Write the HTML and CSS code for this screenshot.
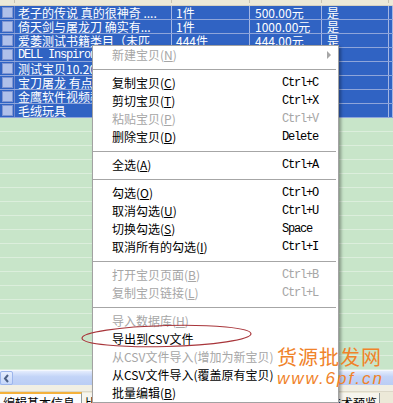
FILE: index.html
```html
<!DOCTYPE html>
<html lang="zh-CN">
<head>
<meta charset="utf-8">
<title>宝贝列表</title>
<link rel="stylesheet" href="styles.css">
</head>
<body>
<div class="screen">
  <div class="grid">
    <div class="head">
      <div class="head-in">
        <div class="hc c0"></div>
        <div class="hc c1">标题</div>
        <div class="hc c2">数量</div>
        <div class="hc c3">价格</div>
        <div class="hc c4">自动上架</div>
        <div class="hc cf"></div>
      </div>
    </div>
    <div class="row"><div class="cell c0"><span class="box"></span></div><div class="cell c1">老子的传说 真的很神奇 ....</div><div class="cell c2">1件</div><div class="cell c3">500.00元</div><div class="cell c4">是</div><div class="cell cf"></div></div>
    <div class="row"><div class="cell c0"><span class="box"></span></div><div class="cell c1">倚天剑与屠龙刀 确实有...</div><div class="cell c2">1件</div><div class="cell c3">1000.00元</div><div class="cell c4">是</div><div class="cell cf"></div></div>
    <div class="row"><div class="cell c0"><span class="box"></span></div><div class="cell c1">爱萎测试书籍类目（未匹</div><div class="cell c2">444件</div><div class="cell c3">444.00元</div><div class="cell c4">是</div><div class="cell cf"></div></div>
    <div class="row"><div class="cell c0"><span class="box"></span></div><div class="cell c1 mono">DELL Inspiron 1420</div><div class="cell c2">1件</div><div class="cell c3">6000.00元</div><div class="cell c4">是</div><div class="cell cf"></div></div>
    <div class="row"><div class="cell c0"><span class="box"></span></div><div class="cell c1">测试宝贝10.20...</div><div class="cell c2">1件</div><div class="cell c3">10.00元</div><div class="cell c4">是</div><div class="cell cf"></div></div>
    <div class="row"><div class="cell c0"><span class="box"></span></div><div class="cell c1">宝刀屠龙 有点...</div><div class="cell c2">1件</div><div class="cell c3">100.00元</div><div class="cell c4">是</div><div class="cell cf"></div></div>
    <div class="row"><div class="cell c0"><span class="box"></span></div><div class="cell c1">金鹰软件视频教程...</div><div class="cell c2">1件</div><div class="cell c3">20.00元</div><div class="cell c4">是</div><div class="cell cf"></div></div>
    <div class="row"><div class="cell c0"><span class="box"></span></div><div class="cell c1">毛绒玩具</div><div class="cell c2">1件</div><div class="cell c3">30.00元</div><div class="cell c4">是</div><div class="cell cf"></div></div>
    <div class="empty"></div>
    <div class="hscroll">
      <div class="sbtn"><svg width="7" height="9" viewBox="0 0 7 9"><path d="M5 1 L2 4.5 L5 8" fill="none" stroke="#4D6185" stroke-width="2"/></svg></div>
      <div class="strack"></div>
    </div>
  </div>
  <div class="gap"></div>
  <div class="tabs">
    <div class="tab on">编辑基本信息</div>
    <div class="tab t2">比较价格信息</div>
    <div class="tab t3">宝贝描述技术预览</div>
  </div>

  <div class="menu">
    <div class="mi dis"><span class="lb">新建宝贝(<u>N</u>)</span><span class="sc"></span><span class="arr"></span></div>
    <div class="sep"></div>
    <div class="mi"><span class="lb">复制宝贝(<u>C</u>)</span><span class="sc">Ctrl+C</span></div>
    <div class="mi"><span class="lb">剪切宝贝(<u>T</u>)</span><span class="sc">Ctrl+X</span></div>
    <div class="mi dis"><span class="lb">粘贴宝贝(<u>P</u>)</span><span class="sc">Ctrl+V</span></div>
    <div class="mi"><span class="lb">删除宝贝(<u>D</u>)</span><span class="sc">Delete</span></div>
    <div class="sep"></div>
    <div class="mi"><span class="lb">全选(<u>A</u>)</span><span class="sc">Ctrl+A</span></div>
    <div class="sep"></div>
    <div class="mi"><span class="lb">勾选(<u>O</u>)</span><span class="sc">Ctrl+O</span></div>
    <div class="mi"><span class="lb">取消勾选(<u>U</u>)</span><span class="sc">Ctrl+U</span></div>
    <div class="mi"><span class="lb">切换勾选(<u>S</u>)</span><span class="sc">Space</span></div>
    <div class="mi"><span class="lb">取消所有的勾选(<u>I</u>)</span><span class="sc">Ctrl+I</span></div>
    <div class="sep"></div>
    <div class="mi dis"><span class="lb">打开宝贝页面(<u>B</u>)</span><span class="sc">Ctrl+B</span></div>
    <div class="mi dis"><span class="lb">复制宝贝链接(<u>L</u>)</span><span class="sc">Ctrl+L</span></div>
    <div class="sep"></div>
    <div class="mi dis"><span class="lb">导入数据库(<u>H</u>)</span><span class="sc"></span></div>
    <div class="mi"><span class="lb">导出到CSV文件</span><span class="sc"></span></div>
    <div class="mi dis"><span class="lb">从CSV文件导入(增加为新宝贝)</span><span class="sc"></span></div>
    <div class="mi"><span class="lb">从CSV文件导入(覆盖原有宝贝)</span><span class="sc"></span></div>
    <div class="mi"><span class="lb">批量编辑(<u>B</u>)</span><span class="sc"></span></div>
  </div>

  <svg class="ring" width="393" height="403" viewBox="0 0 393 403">
    <ellipse cx="166.5" cy="336" rx="84.5" ry="10.5" transform="rotate(-1.5 166.5 336)" fill="none" stroke="#A8353A" stroke-width="1.2"/>
  </svg>

  <div class="mark">
    <div class="mark-cn">货源批发网</div>
    <div class="mark-en">www.6pf.cn</div>
  </div>
</div>
</body>
</html>
```

FILE: styles.css
```css
* {
  box-sizing: border-box;
  margin: 0;
  padding: 0;
}

html, body {
  width: 393px;
  height: 403px;
  overflow: hidden;
}

body {
  font-family: "Noto Sans CJK SC", "Noto Sans", sans-serif;
  font-size: 12px;
  background: #ECE9D8;
  color: #000;
}

.screen {
  position: relative;
  width: 393px;
  height: 403px;
  display: flex;
  flex-direction: column;
  overflow: hidden;
}

/* ---------- grid ---------- */
.grid {
  display: flex;
  flex-direction: column;
  height: 385px;
  flex: none;
}

.head {
  height: 6px;
  overflow: hidden;
  background: #ECE9D8;
  border-bottom: 1px solid #D6D2C2;
  flex: none;
}

.head-in {
  display: flex;
  height: 19px;
  margin-top: -16px;
  line-height: 19px;
}

.hc {
  border-right: 1px solid #C7C3B3;
  white-space: nowrap;
  overflow: hidden;
}

.c0 { width: 15px; flex: none; }
.c1 { width: 157px; flex: none; padding-left: 3px; }
.c2 { width: 78px; flex: none; padding-left: 4px; }
.c3 { width: 72px; flex: none; padding-left: 5px; }
.c4 { width: 67px; flex: none; padding-left: 5px; }
.cf { flex: 1; border-right: none; }

.head .c1 { padding-left: 4px; }
.head .c2 { padding-left: 10px; }
.head .c3 { padding-left: 16px; }
.head .c4 { padding-left: 11px; }

.row {
  display: flex;
  height: 14px;
  flex: none;
  background: #3063C3;
  color: #fff;
  border-bottom: 1px solid #8EA5DA;
  line-height: 14px;
}

.cell {
  border-right: 1px solid #A3B6E4;
  white-space: nowrap;
  overflow: hidden;
}

.row .c0 {
  padding: 1px 0 0 2px;
  border-right: 1px solid #6F87CC;
}

.box {
  display: block;
  width: 11px;
  height: 11px;
  background: #AFC0EA;
  border: 1px solid #7F95D2;
}

.mono {
  font-family: "Liberation Mono", monospace;
  letter-spacing: -1.2px;
}

.empty {
  flex: 1;
  background: repeating-linear-gradient(to bottom, #C8E5C9 0 13px, #DCEEDC 13px 14px);
}

.hscroll {
  height: 15px;
  flex: none;
  display: flex;
  background: linear-gradient(#E4ECFD, #C3D4F7 40%, #BACDF5);
  border-top: 1px solid #F4F7FE;
}

.sbtn {
  width: 13px;
  height: 14px;
  display: flex;
  align-items: center;
  justify-content: center;
  background: linear-gradient(#E6EEFE, #C5D6FA);
  border: 1px solid #9CB5EC;
  border-radius: 2px;
}

.strack {
  flex: 1;
}

.gap {
  height: 6px;
  flex: none;
  background: #F1EFE4;
}

/* ---------- tabs ---------- */
.tabs {
  display: flex;
  height: 12px;
  flex: none;
  background: #ECE9D8;
  border-top: 1px solid #DCD8C8;
}

.tab {
  flex: none;
  white-space: nowrap;
  overflow: hidden;
  line-height: 16px;
  padding-top: 2px;
  border-right: 1px solid #919B9C;
  background: #F6F5EE;
}

.tab.on {
  width: 82px;
  padding-left: 3px;
  background: #FCFCFE;
  border-top: 2px solid #F4B13C;
  padding-top: 1px;
}

.tab.t2 {
  width: 150px;
  padding-left: 3px;
  margin-top: 1px;
}

.tab.t3 {
  width: 148px;
  text-align: right;
  padding-right: 2px;
  margin-top: 1px;
}

/* ---------- context menu ---------- */
.menu {
  position: absolute;
  left: 92px;
  top: 45px;
  width: 247px;
  background: #FFFFFF;
  border: 1px solid #A2A2A2;
  box-shadow: 2px 2px 3px rgba(0, 0, 0, 0.35);
  color: #000;
}

.mi {
  display: flex;
  align-items: center;
  height: 18px;
  line-height: 18px;
  padding-left: 19px;
  white-space: nowrap;
}

.mi.dis {
  color: #A6A6A6;
}

.lb {
  width: 170px;
  flex: none;
}

.sc {
  font-family: "Liberation Mono", monospace;
  font-size: 12px;
  letter-spacing: -1.2px;
}

.arr {
  margin-left: auto;
  margin-right: 7px;
  width: 0;
  height: 0;
  border-left: 4px solid #A6A6A6;
  border-top: 4px solid transparent;
  border-bottom: 4px solid transparent;
}

.sep {
  height: 10px;
  display: flex;
  align-items: center;
  padding-right: 2px;
}

.sep::after {
  content: "";
  flex: 1;
  height: 1px;
  background: #A6A6A6;
}

/* ---------- overlays ---------- */
.ring {
  position: absolute;
  left: 0;
  top: 0;
  pointer-events: none;
}

.mark {
  position: absolute;
  left: 277px;
  top: 345px;
  color: #F0832A;
}

.mark-cn {
  font-size: 20px;
  line-height: 24px;
  letter-spacing: 1px;
}

.mark-en {
  font-family: "Liberation Sans", sans-serif;
  font-style: italic;
  font-size: 17px;
  line-height: 20px;
  letter-spacing: 2px;
}
```
